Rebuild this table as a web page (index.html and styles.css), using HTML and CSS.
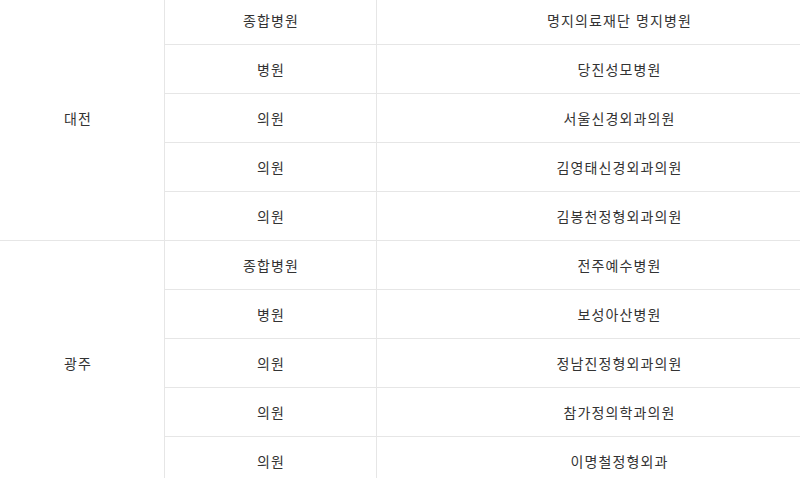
FILE: index.html
```html
<!DOCTYPE html>
<html lang="ko">
<head>
<meta charset="utf-8">
<title>병원 목록</title>
<link rel="stylesheet" href="styles.css">
</head>
<body>
<div class="viewport">
  <table class="hospitals">
    <colgroup>
      <col class="c-region">
      <col class="c-type">
      <col class="c-name">
    </colgroup>
    <tbody>
      <tr><td class="region" rowspan="5">대전</td><td>종합병원</td><td>명지의료재단 명지병원</td></tr>
      <tr><td>병원</td><td>당진성모병원</td></tr>
      <tr><td>의원</td><td>서울신경외과의원</td></tr>
      <tr><td>의원</td><td>김영태신경외과의원</td></tr>
      <tr><td>의원</td><td>김봉천정형외과의원</td></tr>
      <tr><td class="region" rowspan="5">광주</td><td>종합병원</td><td>전주예수병원</td></tr>
      <tr><td>병원</td><td>보성아산병원</td></tr>
      <tr><td>의원</td><td>정남진정형외과의원</td></tr>
      <tr><td>의원</td><td>참가정의학과의원</td></tr>
      <tr><td>의원</td><td>이명철정형외과</td></tr>
    </tbody>
  </table>
</div>
</body>
</html>
```
FILE: styles.css
```css
html, body {
  margin: 0;
  padding: 0;
  background: #fff;
}
.viewport {
  width: 800px;
  height: 478px;
  overflow: hidden;
}
.hospitals {
  border-collapse: separate;
  border-spacing: 0;
  table-layout: fixed;
  width: 870px;
  margin: -4px 0 0 -9px;
  font-family: "Noto Sans CJK KR", "Noto Sans", sans-serif;
  font-size: 14px;
  letter-spacing: 1.1px;
  color: #333;
}
.c-region { width: 173px; }
.c-type { width: 212px; }
.c-name { width: 485px; }
.hospitals td {
  box-sizing: border-box;
  height: 49px;
  padding: 0 0 0 1px;
  text-align: center;
  vertical-align: middle;
  border-bottom: 1px solid #e6e6e6;
  border-left: 1px solid #e6e6e6;
  line-height: 20px;
}
.hospitals td.region {
  border-left: none;
}
```
